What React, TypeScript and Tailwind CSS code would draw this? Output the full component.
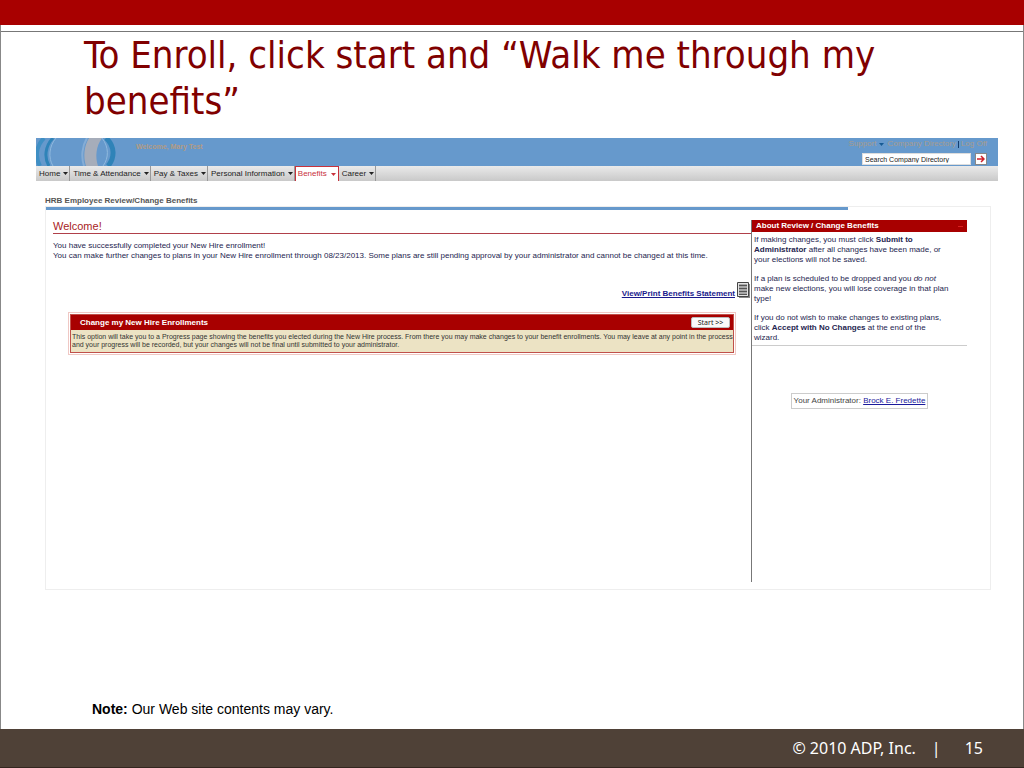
import { ReactNode } from "react";

type NavItem = {
  label: string;
  active?: boolean;
};

const navItems: NavItem[] = [
  { label: "Home" },
  { label: "Time & Attendance" },
  { label: "Pay & Taxes" },
  { label: "Personal Information" },
  { label: "Benefits", active: true },
  { label: "Career" },
];

const Caret = ({ className = "" }: { className?: string }) => (
  <svg viewBox="0 0 5 3" className={`h-[3px] w-[5px] shrink-0 ${className}`}>
    <path d="M0 0h5L2.5 3z" fill="currentColor" />
  </svg>
);

// two overlapping rings on the left of the banner
const BannerRings = () => (
  <svg viewBox="0 0 90 28" className="h-[28px] w-[90px] shrink-0" fill="none">
    <path d="M8 0C0 8-1 19 4 28" stroke="#3f8fc4" strokeWidth="4" />
    <path d="M17 0C9 8 8 20 13 28" stroke="#2f83b8" strokeWidth="3" />
    <path d="M20 0C13 8 12 20 17 28" stroke="#8fb9de" strokeWidth="1" />
    <path d="M53 0c-5 8-6 19-3 28h12c-3-9-2-20 4-28z" fill="#a6adba" />
    <path d="M51 0c-5 8-6 19-3 28" stroke="#85add6" strokeWidth="2" />
    <path d="M70 0c9 8 9 20 2 28" stroke="#2f83b8" strokeWidth="5" />
    <path d="M66 0c7 9 7 20 1 28" stroke="#8fb9de" strokeWidth="1" />
  </svg>
);

const StatementIcon = () => (
  <svg viewBox="0 0 13 17" className="h-[17px] w-[13px] shrink-0">
    <path d="M2 2h11v14H2z" fill="#888" />
    <path d="M.5.5h11v14H.5z" fill="#e4e4e4" stroke="#444" />
    <path d="M2 2h8v11H2z" fill="#a8a8a8" />
    <path d="M2 3.5h8M2 6.5h8M2 9.5h8M2 12.5h8" stroke="#555" />
  </svg>
);

const Nav = () => (
  <nav className="flex h-[15px] bg-linear-to-b from-[#eaeaea] to-[#c9c9c9] text-[8px] text-[#222]">
    {navItems.map(({ label, active }) => (
      <a
        key={label}
        href="#"
        className={
          active
            ? "flex items-center gap-[4px] border-x border-t border-[#c8323c] bg-white px-[2px] text-[#c8323c]"
            : "flex items-center gap-[3px] border-r border-[#999] pl-[3px] pr-px"
        }
      >
        {label}
        <Caret />
      </a>
    ))}
  </nav>
);

const Banner = () => (
  <header className="flex h-[28px] justify-between bg-[#6699cc]">
    <div className="flex gap-[10px]">
      <BannerRings />
      <span className="pt-[4px] text-[7px] leading-[10px] font-bold text-[#b39b84]">
        Welcome, Mary Test
      </span>
    </div>
    <div className="flex flex-col items-end justify-between pr-[11px]">
      <div className="flex items-center text-[8px] leading-[12px] text-[#a69c8f]">
        <a href="#">Support</a>
        <Caret className="mx-[3px] text-[#175a94]" />
        <a href="#">Company Directory</a>
        <span className="mx-[2px] h-[7px] w-px bg-[#123c70]" />
        <a href="#">Log Off</a>
      </div>
      <form className="flex gap-[4px] pb-px" onSubmit={(e) => e.preventDefault()}>
        <input
          type="text"
          aria-label="Search Company Directory"
          defaultValue="Search Company Directory"
          className="h-[12px] w-[109px] border border-[#ddd] bg-white px-[2px] text-[7px] leading-[10px] text-[#222]"
        />
        <button
          type="submit"
          aria-label="Search"
          className="flex h-[12px] w-[12px] items-center justify-center border border-[#888] bg-white"
        >
          <svg viewBox="0 0 8 8" className="h-[8px] w-[8px]" fill="none">
            <path d="M0 4h7M4 1l3 3-3 3" stroke="#d0202a" strokeWidth="1.5" />
          </svg>
        </button>
      </form>
    </div>
  </header>
);

const Enrollment = () => (
  <section className="ml-[15px] mr-[15px] border border-[#f0c8c4] p-px">
    <div className="border border-[#c0504a] bg-[#ece3c4]">
      <div className="flex h-[15px] items-center justify-between bg-[#a80000] pl-[9px] pr-[3px]">
        <h3 className="text-[8px] font-bold text-white">
          Change my New Hire Enrollments
        </h3>
        <button className="h-[11px] w-[39px] rounded-xs border border-[#bbb] bg-[#fafafa] font-['Noto_Sans',sans-serif] text-[7px] leading-[9px] text-[#222]">
          Start &gt;&gt;
        </button>
      </div>
      <p className="pl-px pt-[3px] pb-[3px] text-[7px] leading-[8px] text-[#333]">
        This option will take you to a Progress page showing the benefits you
        elected during the New Hire process. From there you may make changes to
        your benefit enrollments. You may leave at any point in the process and
        your progress will be recorded, but your changes will not be final until
        submitted to your administrator.
      </p>
    </div>
  </section>
);

const Paragraph = ({ children }: { children: ReactNode }) => (
  <p className="mb-[9px] last:mb-0">{children}</p>
);

const Sidebar = () => (
  <aside className="w-[239px] shrink-0 border-l border-[#777] pr-[23px]">
    <h3 className="flex h-[12px] items-center justify-between bg-[#a80000] px-[4px] text-[8px] font-bold text-white">
      About Review / Change Benefits
      <span className="h-px w-[5px] bg-[#d82020]" />
    </h3>
    <div className="border-b border-[#ccc] pt-[3px] pb-[2px] pl-[2px] text-[8px] leading-[10px] text-[#25254f]">
      <Paragraph>
        If making changes, you must click <b>Submit to</b>
        <br />
        <b>Administrator</b> after all changes have been made, or
        <br />
        your elections will not be saved.
      </Paragraph>
      <Paragraph>
        If a plan is scheduled to be dropped and you <i>do not</i>
        <br />
        make new elections, you will lose coverage in that plan
        <br />
        type!
      </Paragraph>
      <Paragraph>
        If you do not wish to make changes to existing plans,
        <br />
        click <b>Accept with No Changes</b> at the end of the
        <br />
        wizard.
      </Paragraph>
    </div>
    <div className="mt-[47px] flex justify-center">
      <p className="border border-[#ccc] px-[2px] text-[8px] leading-[14px] whitespace-nowrap text-[#444]">
        Your Administrator:{" "}
        <a href="#" className="text-[#1a1a9c] underline">
          Brock E. Fredette
        </a>
      </p>
    </div>
  </aside>
);

const Portal = () => (
  <div className="ml-[35px] mr-[25px] mt-[14px] font-['Liberation_Sans',Arial,sans-serif]">
    <Banner />
    <Nav />
    <div className="pl-[9px] pr-[7px] pt-[15px]">
      <h2 className="text-[8px] leading-[10px] font-bold text-[#555]">
        HRB Employee Review/Change Benefits
      </h2>
      <div className="border border-t-0 border-[#eee]">
        <div className="border-t border-[#eee]">
          <div className="h-[3px] w-[85%] bg-[#6699cc]" />
        </div>
        <div className="flex h-[372px] pt-[10px]">
          <main className="min-w-0 flex-1 pl-[7px]">
            <h2 className="border-b border-[#b0404a] text-[11px] leading-[13px] text-[#a81c24]">
              Welcome!
            </h2>
            <p className="pt-[7px] text-[8px] leading-[10px] text-[#25254f]">
              You have successfully completed your New Hire enrollment!
              <br />
              You can make further changes to plans in your New Hire enrollment
              through 08/23/2013. Some plans are still pending approval by your
              administrator and cannot be changed at this time.
            </p>
            <div className="mt-[21px] mb-[13px] flex items-end justify-end gap-[2px] pr-px">
              <a
                href="#"
                className="text-[8px] leading-[10px] font-bold text-[#1a1a8c] underline"
              >
                View/Print Benefits Statement
              </a>
              <StatementIcon />
            </div>
            <Enrollment />
          </main>
          <Sidebar />
        </div>
        <div className="h-[7px]" />
      </div>
    </div>
  </div>
);

export default function App() {
  return (
    <div className="flex min-h-screen flex-col bg-white">
      <div className="h-[25px] bg-[#a80000]" />
      <div className="flex flex-1 flex-col border-x border-[#888]">
        <div className="h-[7px] border-b border-[#777]" />
        <h1 className="pr-[100px] pl-[83px] font-['DejaVu_Sans_Condensed','Noto_Sans',sans-serif] text-[38px] leading-[46px] text-[#800000]">
          To Enroll, click start and “Walk me through my benefits”
        </h1>
        <Portal />
        <p className="mt-auto mb-[10px] pl-[91px] font-['Liberation_Sans',Arial,sans-serif] text-[14px] leading-[20px] text-black">
          <b>Note:</b> Our Web site contents may vary.
        </p>
      </div>
      <footer className="flex h-[39px] items-center justify-end gap-[16px] border-b border-[#33261f] bg-[#4f4137] pr-[41px] font-['Noto_Sans',sans-serif] text-[16px] text-white">
        <span>© 2010 ADP, Inc.</span>
        <span>|</span>
        <span className="pl-[8px]">15</span>
      </footer>
    </div>
  );
}
